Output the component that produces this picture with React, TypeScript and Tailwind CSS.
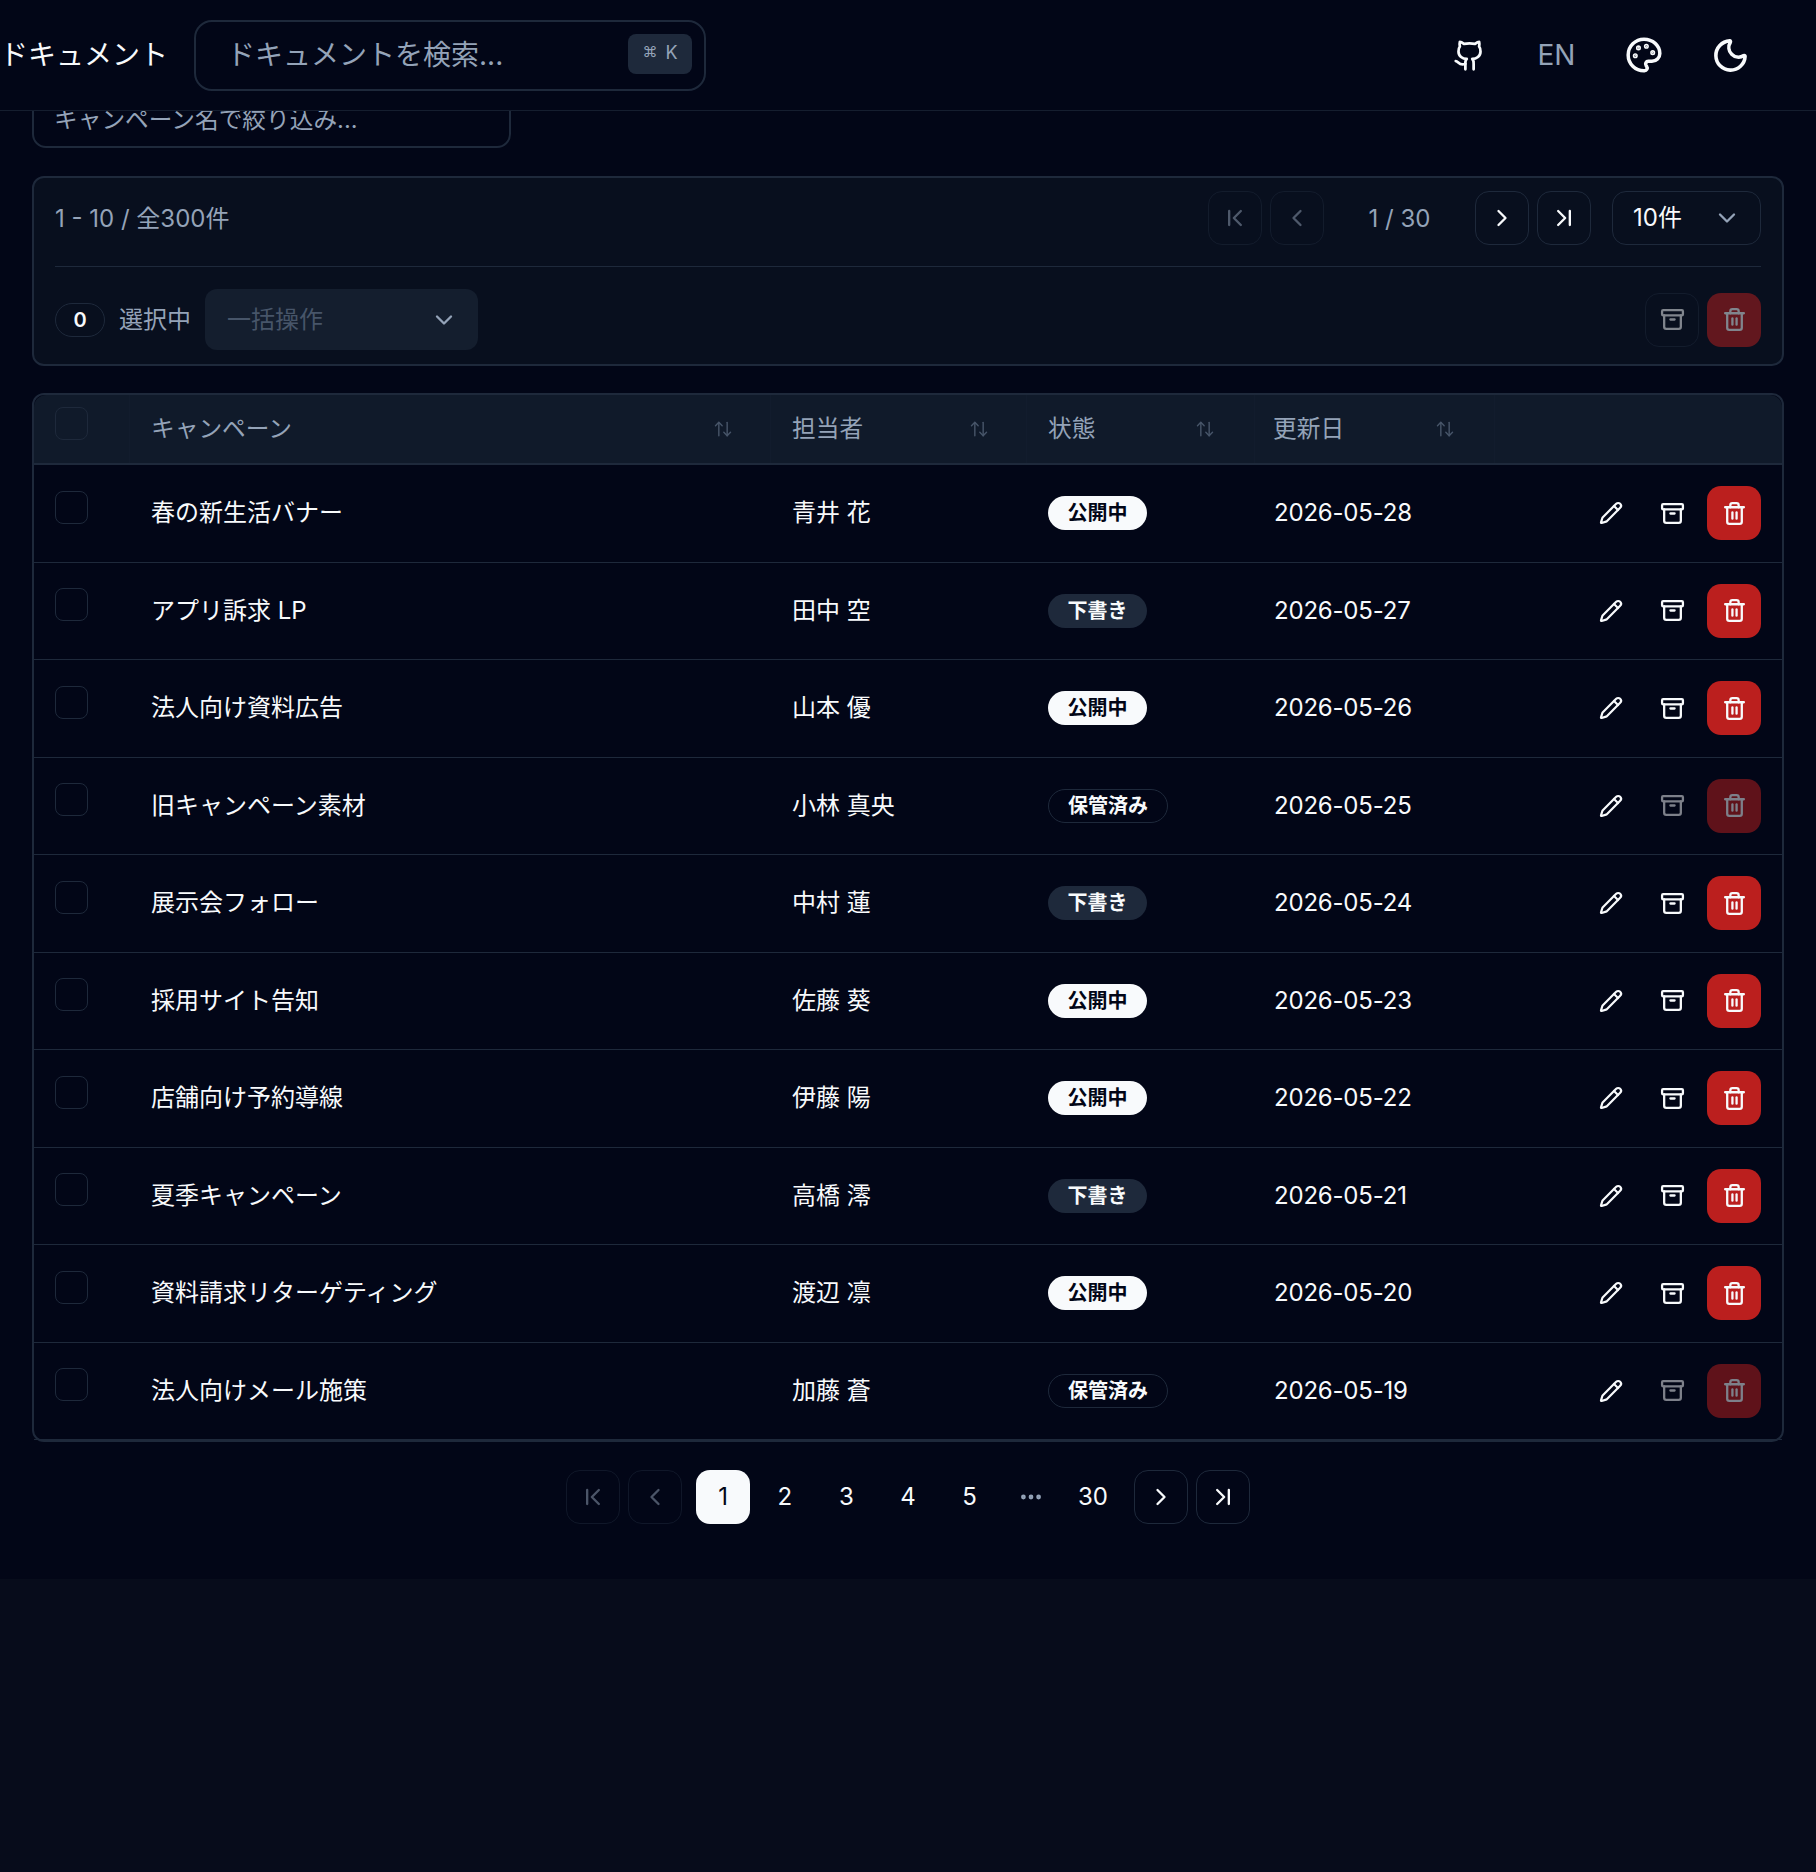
import React from 'react';
import {
  ArrowUpDown,
  Archive,
  ChevronDown,
  ChevronFirst,
  ChevronLast,
  ChevronLeft,
  ChevronRight,
  Ellipsis,
  Github,
  Moon,
  Palette,
  Pencil,
  Trash2,
} from 'lucide-react';

type Status = 'published' | 'draft' | 'archived';

interface Campaign {
  name: string;
  owner: string;
  status: Status;
  updated: string;
}

const campaigns: Campaign[] = [
  { name: '春の新生活バナー', owner: '青井 花', status: 'published', updated: '2026-05-28' },
  { name: 'アプリ訴求 LP', owner: '田中 空', status: 'draft', updated: '2026-05-27' },
  { name: '法人向け資料広告', owner: '山本 優', status: 'published', updated: '2026-05-26' },
  { name: '旧キャンペーン素材', owner: '小林 真央', status: 'archived', updated: '2026-05-25' },
  { name: '展示会フォロー', owner: '中村 蓮', status: 'draft', updated: '2026-05-24' },
  { name: '採用サイト告知', owner: '佐藤 葵', status: 'published', updated: '2026-05-23' },
  { name: '店舗向け予約導線', owner: '伊藤 陽', status: 'published', updated: '2026-05-22' },
  { name: '夏季キャンペーン', owner: '高橋 澪', status: 'draft', updated: '2026-05-21' },
  { name: '資料請求リターゲティング', owner: '渡辺 凛', status: 'published', updated: '2026-05-20' },
  { name: '法人向けメール施策', owner: '加藤 蒼', status: 'archived', updated: '2026-05-19' },
];

const gridCols = 'grid grid-cols-[96px_641px_256px_228px_240px_1fr]';

function StatusBadge({ status }: { status: Status }) {
  if (status === 'published') {
    return (
      <span className="flex h-[34px] w-[99px] items-center justify-center rounded-full bg-[#f8fafc] text-[20px] font-semibold text-[#020617]">
        公開中
      </span>
    );
  }
  if (status === 'draft') {
    return (
      <span className="flex h-[34px] w-[99px] items-center justify-center rounded-full bg-[#1e293b] text-[20px] font-semibold text-[#f8fafc]">
        下書き
      </span>
    );
  }
  return (
    <span className="flex h-[34px] w-[120px] items-center justify-center rounded-full border-[1.5px] border-[#1e293b] text-[20px] font-semibold text-[#f8fafc]">
      保管済み
    </span>
  );
}

function OutlineButton({ children, disabled = false }: { children: React.ReactNode; disabled?: boolean }) {
  return (
    <button
      className={
        disabled
          ? 'flex h-[54px] w-[54px] items-center justify-center rounded-[14px] border-[1.5px] border-[#1e293b] text-[#f8fafc] opacity-50'
          : 'flex h-[54px] w-[54px] items-center justify-center rounded-[14px] border-[1.5px] border-[#1e293b] text-[#f8fafc]'
      }
    >
      {children}
    </button>
  );
}

function TrashButton({ disabled = false }: { disabled?: boolean }) {
  return (
    <button
      className={
        disabled
          ? 'flex h-[54px] w-[54px] items-center justify-center rounded-[14px] bg-[#bb1f1e] text-[#f8fafc] opacity-50'
          : 'flex h-[54px] w-[54px] items-center justify-center rounded-[14px] bg-[#bb1f1e] text-[#f8fafc]'
      }
    >
      <Trash2 size={25} strokeWidth={2.2} />
    </button>
  );
}

function HeaderCell({ label, pad }: { label: string; pad: string }) {
  return (
    <div className={`flex items-center justify-between border-r border-[#1e293b]/20 text-[#94a3b8] ${pad}`}>
      <span className="text-[23.7px]">{label}</span>
      <ArrowUpDown size={20} strokeWidth={1.7} className="text-[#475569]" />
    </div>
  );
}

function Row({ campaign }: { campaign: Campaign }) {
  const archived = campaign.status === 'archived';
  return (
    <div className={`${gridCols} h-[97.5px] border-b border-[#1e293b] text-[24px] text-[#f8fafc]`}>
      <div className="flex items-center pl-[21px]">
        <span className="mb-[12px] h-[33px] w-[33px] rounded-[8px] border-[1.5px] border-[#1e293b]" />
      </div>
      <div className="flex items-center pl-[21px]">{campaign.name}</div>
      <div className="flex items-center pl-[21px]">{campaign.owner}</div>
      <div className="flex items-center pl-[21px]">
        <StatusBadge status={campaign.status} />
      </div>
      <div className="flex items-center pl-[19px] tracking-[-0.2px]">{campaign.updated}</div>
      <div className="flex items-center justify-end gap-[7.5px] pr-[21px]">
        <span className="flex h-[54px] w-[54px] items-center justify-center">
          <Pencil size={24} strokeWidth={2.2} />
        </span>
        <span
          className={
            archived
              ? 'flex h-[54px] w-[54px] items-center justify-center opacity-50'
              : 'flex h-[54px] w-[54px] items-center justify-center'
          }
        >
          <Archive size={25} strokeWidth={2.2} />
        </span>
        <TrashButton disabled={archived} />
      </div>
    </div>
  );
}

export default function App() {
  return (
    <div className="min-h-[1872px] bg-[#070c1b] font-['Inter','Noto_Sans_CJK_JP',sans-serif] text-[#f8fafc]">
      <div className="bg-[#020617]">
        {/* Top bar */}
        <header className="flex h-[111px] items-center justify-between border-b border-[#1e293b]/70 pr-[42px]">
          <div className="flex items-center gap-[26px]">
            <span className="text-[28px]">ドキュメント</span>
            <div className="flex h-[71px] w-[512px] items-center justify-between rounded-[18px] border-2 border-[#1e293b] pr-[12px] pl-[31px]">
              <span className="text-[28px] text-[#94a3b8]">ドキュメントを検索...</span>
              <kbd className="mb-[2px] flex h-[40px] w-[64px] items-center justify-center gap-[8px] rounded-[8px] bg-[#1e293b] pb-[4px] font-['Inter','Noto_Sans_CJK_JP',sans-serif] text-[18px] text-[#94a3b8]">
                <span className="text-[15px]">⌘</span>
                <span>K</span>
              </kbd>
            </div>
          </div>
          <div className="flex items-center">
            <span className="flex w-[87px] justify-center">
              <Github size={33} />
            </span>
            <span className="flex w-[87px] justify-center text-[28px] text-[#94a3b8]">EN</span>
            <span className="flex w-[87px] justify-center">
              <Palette size={38} strokeWidth={2.2} />
            </span>
            <span className="flex w-[87px] justify-center">
              <Moon size={39} strokeWidth={2.2} />
            </span>
          </div>
        </header>

        <main className="px-[32px] pb-[55px]">
          <div className="flex h-[37px] items-end overflow-hidden">
            <div className="flex h-[71px] w-[479px] items-center rounded-[14px] border-2 border-[#1e293b] pl-[20px] text-[23.7px] text-[#94a3b8]">
              <span className="mt-[14px]">キャンペーン名で絞り込み...</span>
            </div>
          </div>

          {/* Toolbar */}
          <section className="mt-[28px] h-[190px] rounded-[12px] border-2 border-[#1e293b] bg-[#080f1e] px-[21px] pt-[13px]">
            <div className="flex h-[54px] items-center justify-between">
              <span className="pt-[1px] text-[24px] text-[#94a3b8]">1 - 10 / 全300件</span>
              <div className="flex items-center">
                <div className="flex gap-[8px]">
                  <OutlineButton disabled>
                    <ChevronFirst size={28} className="text-[#94a3b8]" />
                  </OutlineButton>
                  <OutlineButton disabled>
                    <ChevronLeft size={28} className="text-[#94a3b8]" />
                  </OutlineButton>
                </div>
                <span className="w-[151px] pt-[1px] text-center text-[24px] text-[#94a3b8]">1 / 30</span>
                <div className="flex gap-[8px]">
                  <OutlineButton>
                    <ChevronRight size={28} />
                  </OutlineButton>
                  <OutlineButton>
                    <ChevronLast size={28} />
                  </OutlineButton>
                </div>
                <div className="ml-[21px] flex h-[54px] w-[149px] items-center justify-between rounded-[14px] border-[1.5px] border-[#1e293b] pr-[19px] pl-[20px] text-[24px]">
                  <span>10件</span>
                  <ChevronDown size={28} className="text-[#94a3b8]" />
                </div>
              </div>
            </div>
            <div className="mt-[21px] h-px bg-[#1e293b]" />
            <div className="mt-[22px] flex h-[61px] items-center justify-between">
              <div className="flex items-center gap-[14px]">
                <span className="flex h-[34px] w-[50px] items-center justify-center rounded-full border-[1.5px] border-[#1e293b] text-[20px] font-semibold">
                  0
                </span>
                <span className="text-[24px] text-[#94a3b8]">選択中</span>
                <div className="flex h-[61px] w-[273px] items-center justify-between rounded-[12px] bg-[#141e2e] pr-[20px] pl-[22px] text-[24px] text-[#475569]">
                  <span>一括操作</span>
                  <ChevronDown size={28} className="text-[#94a3b8]" />
                </div>
              </div>
              <div className="flex gap-[8px]">
                <OutlineButton disabled>
                  <Archive size={25} strokeWidth={2.2} />
                </OutlineButton>
                <TrashButton disabled />
              </div>
            </div>
          </section>

          {/* Table */}
          <section className="mt-[27px] rounded-[12px] border-2 border-[#1e293b]">
            <div className={`${gridCols} h-[70px] rounded-t-[12px] border-b-2 border-[#1e293b] bg-[#101a2a]`}>
              <div className="flex items-center border-r border-[#1e293b]/20 pl-[21px]">
                <span className="mb-[12px] h-[33px] w-[33px] rounded-[8px] border-[1.5px] border-[#1e293b]" />
              </div>
              <HeaderCell label="キャンペーン" pad="pl-[21px] pr-[37px]" />
              <HeaderCell label="担当者" pad="pl-[21px] pr-[37px]" />
              <HeaderCell label="状態" pad="pl-[21px] pr-[39px]" />
              <HeaderCell label="更新日" pad="pl-[18px] pr-[39px]" />
              <div />
            </div>
            {campaigns.map((campaign) => (
              <Row key={campaign.name} campaign={campaign} />
            ))}
          </section>

          {/* Pagination */}
          <nav className="mt-[28px] flex items-center justify-center gap-[14px]">
            <div className="flex gap-[8px]">
              <OutlineButton disabled>
                <ChevronFirst size={28} className="text-[#94a3b8]" />
              </OutlineButton>
              <OutlineButton disabled>
                <ChevronLeft size={28} className="text-[#94a3b8]" />
              </OutlineButton>
            </div>
            <div className="flex gap-[7.65px] text-[24px]">
              <span className="flex h-[54px] w-[54px] items-center justify-center rounded-[14px] bg-[#f8fafc] text-[#020617]">
                1
              </span>
              {['2', '3', '4', '5'].map((page) => (
                <span key={page} className="flex h-[54px] w-[54px] items-center justify-center">
                  {page}
                </span>
              ))}
              <span className="flex h-[54px] w-[54px] items-center justify-center text-[#94a3b8]">
                <Ellipsis size={26} strokeWidth={2.4} />
              </span>
              <span className="flex h-[54px] w-[54px] items-center justify-center">30</span>
            </div>
            <div className="flex gap-[8px]">
              <OutlineButton>
                <ChevronRight size={28} />
              </OutlineButton>
              <OutlineButton>
                <ChevronLast size={28} />
              </OutlineButton>
            </div>
          </nav>
        </main>
      </div>
    </div>
  );
}
